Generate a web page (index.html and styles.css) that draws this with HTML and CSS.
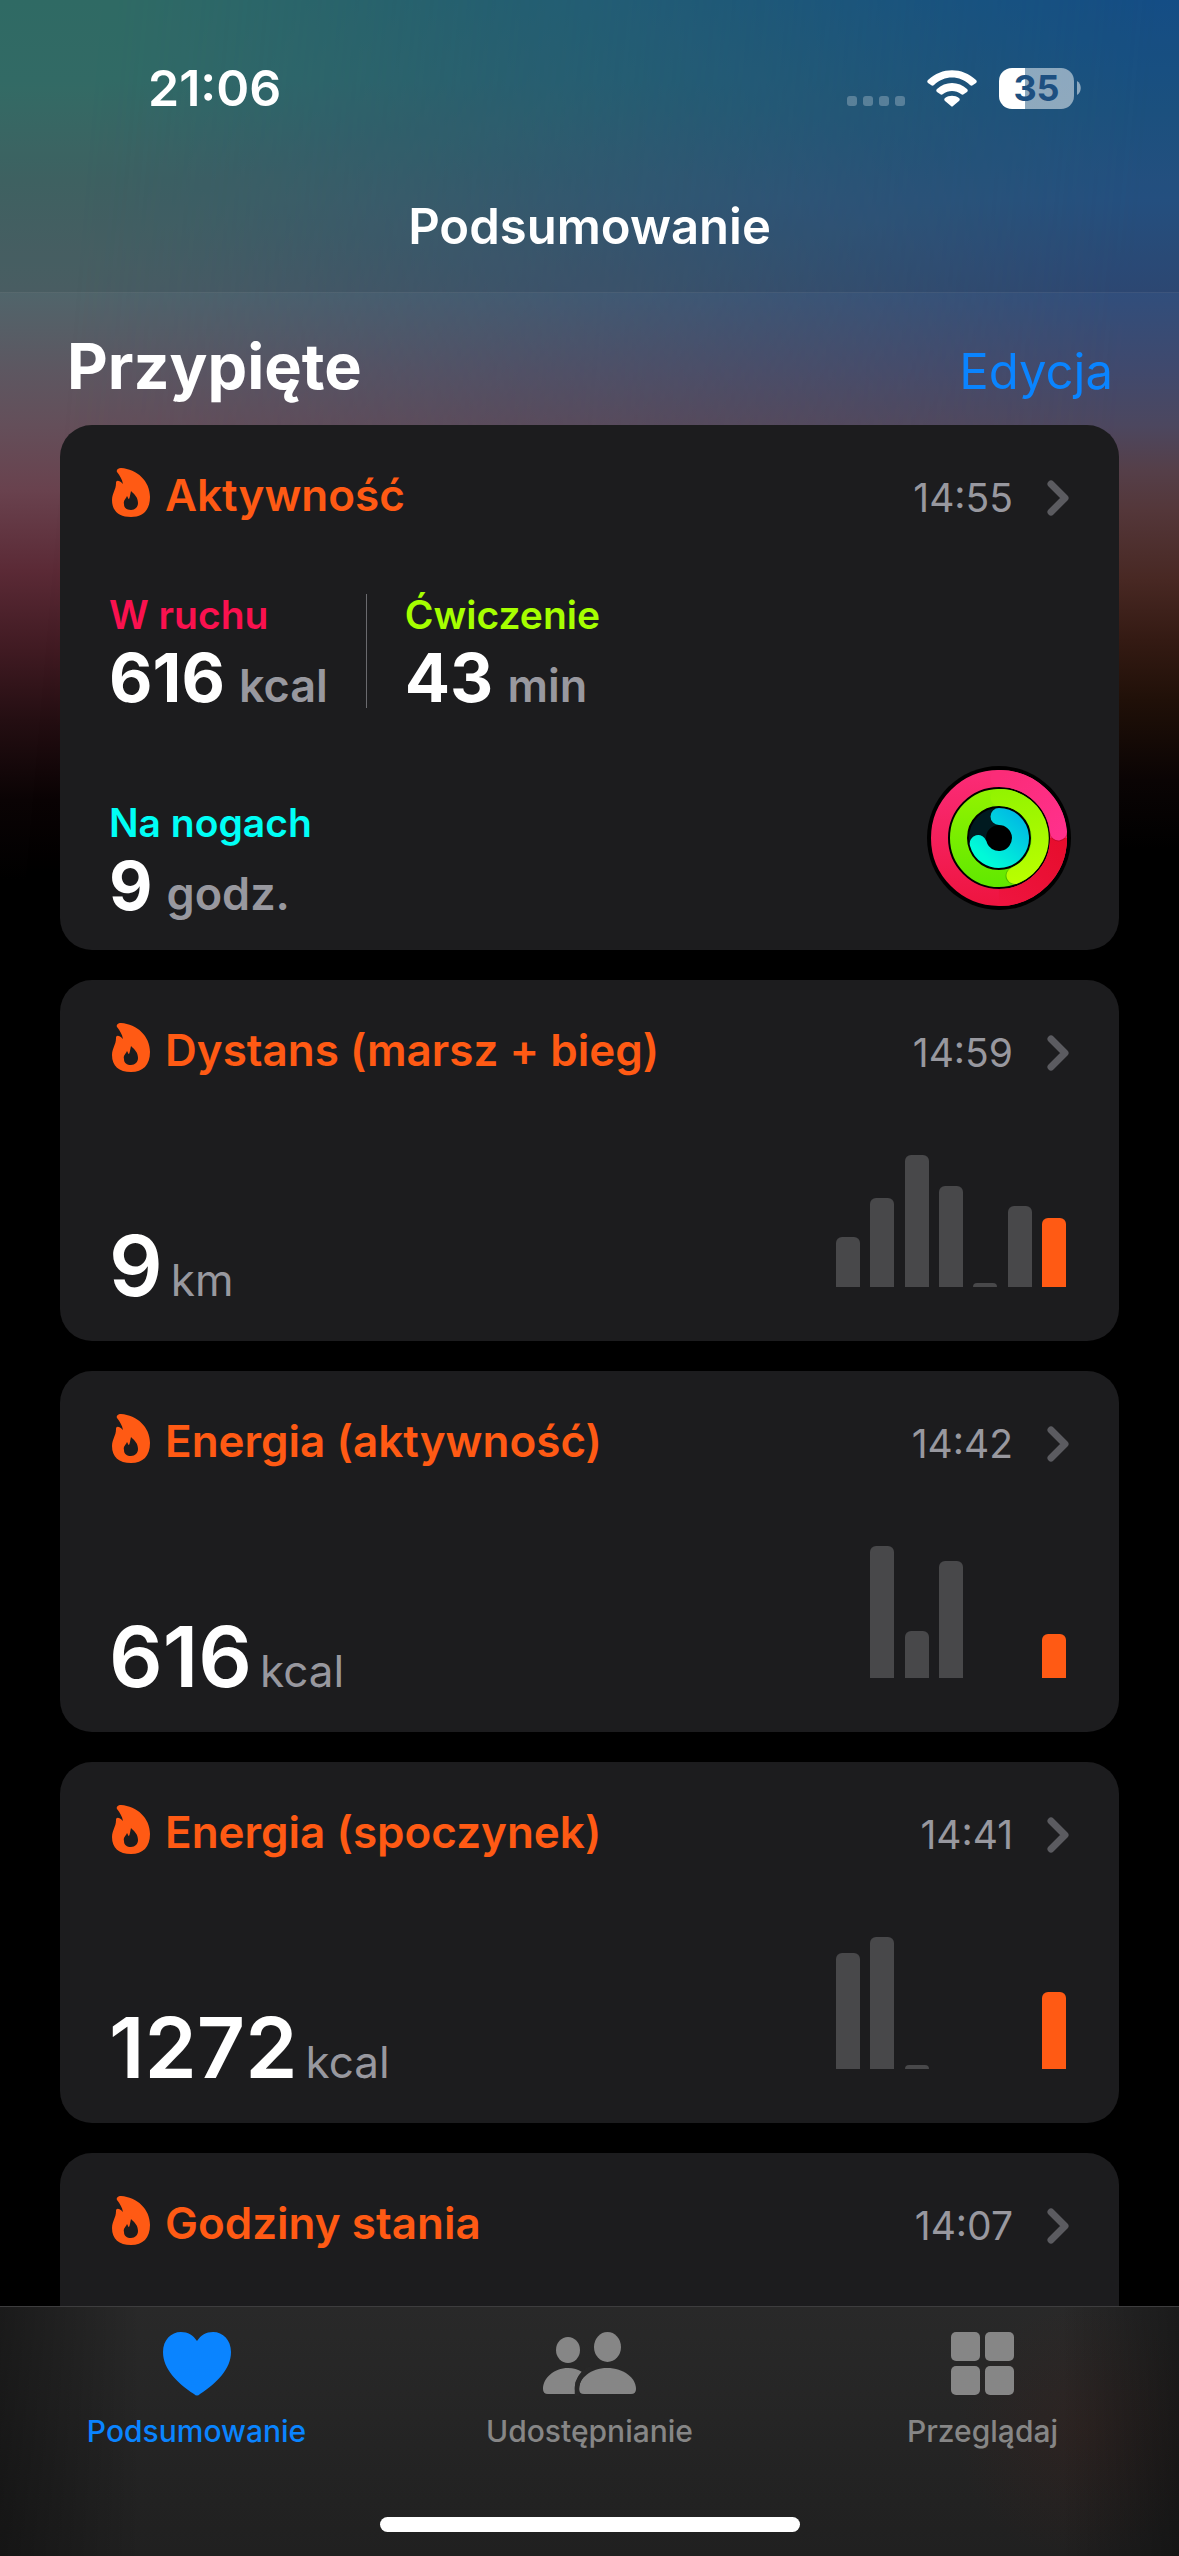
FILE: index.html
```html
<!DOCTYPE html>
<html lang="pl">
<head>
<meta charset="utf-8">
<meta name="viewport" content="width=device-width">
<title>Podsumowanie</title>
<link rel="stylesheet" href="styles.css">
</head>
<body>
<svg class="defs" aria-hidden="true">
  <symbol id="flame" viewBox="0 0 38 49">
    <path fill="currentColor" fill-rule="evenodd" d="M5 4C4 2 6 0 9 0C25 1 38 13 38 29C38 42 31 49 19 49C7 49 0 43 0 32C0 25 4 22 4 15C4 12 7 12 11 16C10 11 8 8 5 4ZM19 23C18 27 18 29 17 31C16 31 16 29 15 28C14 31 11 32 12 36C12 40 15 42 19 42C23 42 26 39 26 35C26 29 22 26 19 23Z"/>
  </symbol>
  <symbol id="chevron" viewBox="0 0 22 36">
    <path fill="none" stroke="currentColor" stroke-width="7" stroke-linecap="round" stroke-linejoin="round" d="M4 4L18 18L4 32"/>
  </symbol>
</svg>

<div class="app">
  <header class="top">
    <div class="status">
      <time class="clock">21:06</time>
      <div class="indicators">
        <span class="signal"><i></i><i></i><i></i><i></i></span>
        <svg class="wifi" viewBox="0 0 50 37" aria-hidden="true">
          <path fill="#fff" d="M1 10C15 -3 35 -3 49 10C50 11 50 12 49 13L46 15C45 16 44 16 43 15C33 5 17 5 7 15C6 16 5 16 4 15L1 13C0 12 0 11 1 10ZM10 19C18 11 32 11 40 19C41 20 41 21 40 22L37 24C36 25 35 25 34 24C29 20 21 20 16 24C15 25 14 25 13 24L10 22C9 21 9 20 10 19ZM18 28C22 25 28 25 32 28C33 29 33 30 32 31L26 36C25 37 25 37 24 36L18 31C17 30 17 29 18 28Z"/>
        </svg>
        <span class="battery"><span class="cell">35</span><svg class="nub" viewBox="0 0 4 14" aria-hidden="true"><path fill="currentColor" d="M0 0C5 3 5 11 0 14Z"/></svg></span>
      </div>
    </div>
    <h1 class="title">Podsumowanie</h1>
  </header>

  <main class="content">
    <div class="section-head">
      <h2>Przypięte</h2>
      <button class="edit" type="button">Edycja</button>
    </div>

    <a class="card activity" href="#activity">
      <div class="card-head">
        <svg class="flame" aria-hidden="true"><use href="#flame"/></svg>
        <h3>Aktywność</h3>
        <time>14:55</time>
        <svg class="chevron" aria-hidden="true"><use href="#chevron"/></svg>
      </div>
      <div class="stats">
        <div class="stat move"><span class="label">W ruchu</span><span class="amount"><b>616</b> kcal</span></div>
        <div class="stat exercise"><span class="label">Ćwiczenie</span><span class="amount"><b>43</b> min</span></div>
      </div>
      <div class="stand-row">
        <div class="stat stand"><span class="label">Na nogach</span><span class="amount"><b>9</b> godz.</span></div>
        <svg class="rings" viewBox="-72 -72 144 144" aria-hidden="true">
          <defs>
            <linearGradient id="red" gradientUnits="userSpaceOnUse" x1="0" y1="-68" x2="0" y2="68"><stop offset="0" stop-color="#fb2c78"/><stop offset="1" stop-color="#ee143f"/></linearGradient>
            <linearGradient id="pink" gradientUnits="userSpaceOnUse" x1="0" y1="-60" x2="60" y2="0"><stop offset="0" stop-color="#fb2c78"/><stop offset="1" stop-color="#ff308c"/></linearGradient>
            <linearGradient id="crimson" gradientUnits="userSpaceOnUse" x1="60" y1="0" x2="0" y2="60"><stop offset="0" stop-color="#e70d2d"/><stop offset="1" stop-color="#ee143f"/></linearGradient>
            <linearGradient id="green" gradientUnits="userSpaceOnUse" x1="0" y1="-49" x2="0" y2="49"><stop offset="0" stop-color="#92f300"/><stop offset="1" stop-color="#60e800"/></linearGradient>
            <linearGradient id="lime" gradientUnits="userSpaceOnUse" x1="0" y1="-49" x2="16" y2="49"><stop offset="0" stop-color="#92f300"/><stop offset="1" stop-color="#bbff00"/></linearGradient>
            <linearGradient id="cyan" gradientUnits="userSpaceOnUse" x1="18" y1="-25" x2="-18" y2="16"><stop offset="0" stop-color="#00b9e4"/><stop offset="1" stop-color="#00fad8"/></linearGradient>
          </defs>
          <circle r="72"/>
          <g fill="none" stroke-width="17" stroke-linecap="round">
            <circle r="59.500" stroke="url(#red)"/>
            <path d="M59.500 0A59.500 59.500 0 0 1 0 59.500" stroke="url(#crimson)" stroke-linecap="butt"/>
            <path d="M59.500 -6V-5" stroke="#8c0820" stroke-opacity=".4"/>
            <path d="M0 -59.500A59.500 59.500 0 0 1 59.500 -6" stroke="url(#pink)"/>
            <circle r="40.500" stroke="url(#green)"/>
            <path d="M16 37.500L15 38" stroke="#2d7800" stroke-opacity=".4"/>
            <path d="M0 -40.500A40.500 40.500 0 0 1 16 37.500" stroke="url(#lime)"/>
            <circle r="21.500" stroke="#001a20"/>
            <path d="M0 -21.500A21.500 21.500 0 1 1 -20.800 5.500" stroke="url(#cyan)"/>
          </g>
        </svg>
      </div>
    </a>

    <a class="card metric" href="#distance">
      <div class="card-head">
        <svg class="flame" aria-hidden="true"><use href="#flame"/></svg>
        <h3>Dystans (marsz + bieg)</h3>
        <time>14:59</time>
        <svg class="chevron" aria-hidden="true"><use href="#chevron"/></svg>
      </div>
      <div class="metric-body">
        <span class="value"><b>9</b> km</span>
        <div class="chart"><i style="height:50px"></i><i style="height:89px"></i><i style="height:132px"></i><i style="height:101px"></i><i style="height:4px"></i><i style="height:81px"></i><i class="today" style="height:69px"></i></div>
      </div>
    </a>

    <a class="card metric" href="#active-energy">
      <div class="card-head">
        <svg class="flame" aria-hidden="true"><use href="#flame"/></svg>
        <h3>Energia (aktywność)</h3>
        <time>14:42</time>
        <svg class="chevron" aria-hidden="true"><use href="#chevron"/></svg>
      </div>
      <div class="metric-body">
        <span class="value"><b>616</b> kcal</span>
        <div class="chart"><i style="height:0"></i><i style="height:132px"></i><i style="height:47px"></i><i style="height:117px"></i><i style="height:0"></i><i style="height:0"></i><i class="today" style="height:44px"></i></div>
      </div>
    </a>

    <a class="card metric" href="#resting-energy">
      <div class="card-head">
        <svg class="flame" aria-hidden="true"><use href="#flame"/></svg>
        <h3>Energia (spoczynek)</h3>
        <time>14:41</time>
        <svg class="chevron" aria-hidden="true"><use href="#chevron"/></svg>
      </div>
      <div class="metric-body">
        <span class="value"><b>1272</b> kcal</span>
        <div class="chart"><i style="height:116px"></i><i style="height:132px"></i><i style="height:4px"></i><i style="height:0"></i><i style="height:0"></i><i style="height:0"></i><i class="today" style="height:77px"></i></div>
      </div>
    </a>

    <a class="card metric" href="#stand-hours">
      <div class="card-head">
        <svg class="flame" aria-hidden="true"><use href="#flame"/></svg>
        <h3>Godziny stania</h3>
        <time>14:07</time>
        <svg class="chevron" aria-hidden="true"><use href="#chevron"/></svg>
      </div>
      <div class="metric-body"></div>
    </a>
  </main>

  <footer class="bottom">
    <nav class="tabs">
      <a class="tab active" href="#summary">
        <svg viewBox="0 0 68 64" aria-hidden="true"><path fill="currentColor" d="M34 9C38 3 43 0 50 0C60 0 68 8 68 20C68 37 54 51 37 62Q34 65 31 62C14 51 0 37 0 20C0 8 8 0 18 0C25 0 30 3 34 9Z"/></svg>
        Podsumowanie
      </a>
      <a class="tab" href="#sharing">
        <svg viewBox="0 0 94 64" aria-hidden="true"><g fill="currentColor"><ellipse cx="25" cy="18" rx="12" ry="13"/><ellipse cx="64.500" cy="15" rx="13.500" ry="15"/><path d="M36 57V62H5Q0 62 0 57C0 46 11 36 25 36Q33 36 39 40Q30 48 32 62H5"/><path d="M41 62Q36 62 36 57C36 46 48 36 64 36C81 36 93 46 93 57Q93 62 88 62Z"/></g><path fill="none" stroke="#282828" stroke-width="4.500" d="M34 65V57C34 48 40 39 48 36"/></svg>
        Udostępnianie
      </a>
      <a class="tab" href="#browse">
        <svg viewBox="0 0 64 64" aria-hidden="true"><g fill="currentColor"><rect width="29" height="29" rx="5"/><rect x="34" width="29" height="29" rx="5"/><rect y="34" width="29" height="29" rx="5"/><rect x="34" y="34" width="29" height="29" rx="5"/></g></svg>
        Przeglądaj
      </a>
    </nav>
    <div class="home-bar"></div>
  </footer>
</div>
</body>
</html>
```
FILE: styles.css
```css
* {
  box-sizing: border-box;
}

body {
  margin: 0;
  background: #000;
  color: #fff;
  font-family: Inter, "Liberation Sans", sans-serif;
}

h1, h2, h3 {
  margin: 0;
}

a {
  color: inherit;
  text-decoration: none;
}

svg {
  display: block;
  flex: none;
}

.defs {
  position: absolute;
  width: 0;
  height: 0;
}

.app {
  position: relative;
  isolation: isolate;
  display: flex;
  flex-direction: column;
  height: 100vh;
  overflow: hidden;
}

/* Colour wash behind the page: one gradient per side, blended across */
.app::before,
.app::after {
  content: "";
  position: absolute;
  inset: 0 0 auto;
  height: 900px;
  z-index: -1;
}

.app::before {
  background: linear-gradient(#34746d 0, #37746e 80px, #446a6a 180px, #50656b 290px, #5d5761 370px, #644f5a 425px, #69424e 490px, #5b2a36 570px, #401a22 650px, #240e12 720px, #0a0304 800px, #000 880px);
}

.app::after {
  background: linear-gradient(#165491 0, #1e5789 110px, #28568a 200px, #304e7c 290px, #40496d 370px, #4c475f 425px, #553f49 470px, #54373a 510px, #482823 580px, #341a13 640px, #201008 700px, #0a0404 780px, #000 850px);
  mask-image: linear-gradient(95deg, transparent 8%, #000 92%);
}

.top {
  flex: none;
  background: rgb(0 0 0 / 8%);
  border-bottom: 1px solid rgb(255 255 255 / 8%);
}

.status {
  display: flex;
  justify-content: space-between;
  align-items: center;
  height: 162px;
  padding: 14px 98px 0 148px;
}

.clock {
  font-size: 50px;
  font-weight: 600;
}

.indicators {
  display: flex;
  align-items: center;
  gap: 22px;
}

.signal {
  display: flex;
  gap: 6px;
  padding-top: 26px;
}

.signal i {
  width: 10px;
  height: 10px;
  border-radius: 3px;
  background: rgb(255 255 255 / 25%);
}

.wifi {
  width: 50px;
  height: 37px;
}

.battery {
  display: flex;
  align-items: center;
  gap: 3px;
  color: rgb(255 255 255 / 50%);
}

.cell {
  width: 75px;
  border-radius: 13px;
  background: linear-gradient(90deg, #fff 35%, rgb(255 255 255 / 50%) 35%);
  color: #1d4f80;
  font-size: 36px;
  font-weight: 700;
  line-height: 41px;
  text-align: center;
}

.nub {
  width: 4px;
  height: 14px;
}

.title {
  font-size: 49px;
  font-weight: 600;
  line-height: 130px;
  text-align: center;
}

.content {
  flex: 1;
  min-height: 0;
  display: flex;
  flex-direction: column;
  gap: 30px;
  padding: 0 60px;
  overflow: hidden;
}

.section-head {
  display: flex;
  justify-content: space-between;
  align-items: baseline;
  height: 102px;
  padding: 33px 6px 0 7px;
}

.section-head h2 {
  font-size: 63px;
  font-weight: 700;
  line-height: 80px;
}

.edit {
  padding: 0;
  border: 0;
  background: none;
  color: #0a84ff;
  font: inherit;
  font-size: 49px;
}

.card {
  flex: none;
  display: flex;
  flex-direction: column;
  padding: 42px 50px 0 49px;
  border-radius: 32px;
  background: #1c1c1e;
}

.activity {
  height: 525px;
}

.metric {
  height: 361px;
}

.card-head {
  display: flex;
  align-items: center;
  color: #ff5a14;
}

.flame {
  width: 38px;
  height: 49px;
  margin: 0 15px 5px 3px;
}

.card-head h3 {
  flex: 1;
  font-size: 44px;
  font-weight: 600;
  line-height: 56px;
}

.card-head time {
  padding-top: 4px;
  color: #98989f;
  font-size: 39px;
}

.chevron {
  width: 22px;
  height: 36px;
  margin: 5px 0 0 34px;
  color: #5b5b60;
}

.stats {
  display: flex;
  margin-top: 71px;
}

.stat {
  display: flex;
  flex-direction: column;
  gap: 12px;
}

.exercise {
  margin-left: 38px;
  padding-left: 38px;
  border-left: 1px solid #6a6a6e;
}

.label {
  font-size: 39px;
  font-weight: 600;
  line-height: 42px;
}

.move .label {
  color: #fa114f;
}

.exercise .label {
  color: #a6ff00;
}

.stand .label {
  color: #00fff6;
}

.amount {
  display: flex;
  align-items: baseline;
  gap: 14px;
  color: #98989f;
  font-size: 45px;
  font-weight: 600;
  line-height: 40px;
}

.amount b {
  color: #fff;
  font-size: 67px;
  font-weight: 700;
  line-height: 60px;
}

.stand-row {
  display: flex;
  justify-content: space-between;
  align-items: flex-start;
  margin-top: 94px;
}

.rings {
  width: 144px;
  height: 144px;
  margin: -36px -2px 0 0;
}

.metric-body {
  flex: 1;
  display: flex;
  justify-content: space-between;
  align-items: flex-end;
}

.value {
  display: flex;
  align-items: baseline;
  gap: 8px;
  padding-bottom: 30px;
  color: #98989f;
  font-size: 44px;
  line-height: 50px;
}

.value b {
  color: #fff;
  font-size: 84px;
  font-weight: 600;
  line-height: 90px;
}

.chart {
  display: flex;
  justify-content: space-between;
  align-items: flex-end;
  width: 230px;
  margin: 0 3px 54px 0;
}

.chart i {
  width: 24px;
  border-radius: 6px 6px 0 0;
  background: #48484a;
}

.chart .today {
  background: #ff5a14;
}

.bottom {
  flex: none;
  height: 250px;
  border-top: 1px solid #3d3d3e;
  background:
    linear-gradient(90deg, rgb(0 0 0 / 35%), transparent 12%, transparent 90%, rgb(0 0 0 / 35%)),
    radial-gradient(circle at 92% 50%, rgb(80 30 20 / 18%), transparent 130px),
    linear-gradient(#292929, #202020);
}

.tabs {
  display: grid;
  grid-template-columns: repeat(3, 1fr);
  height: 210px;
  padding-top: 25px;
}

.tab {
  display: flex;
  flex-direction: column;
  align-items: center;
  gap: 16px;
  color: #868686;
  font-size: 30px;
  font-weight: 500;
  line-height: 38px;
}

.tab svg {
  height: 64px;
}

.tab.active {
  color: #0a84ff;
}

.home-bar {
  width: 420px;
  height: 15px;
  margin: 0 auto;
  border-radius: 8px;
  background: #fff;
}
```
